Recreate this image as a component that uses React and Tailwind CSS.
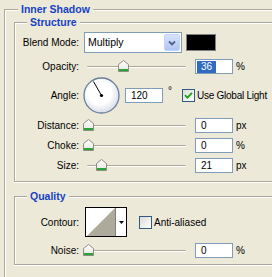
import React from 'react';

const Thumb = () => (
  <svg width="11" height="12" viewBox="0 0 11 12">
    <defs>
      <linearGradient id="thumbFill" x1="0" y1="0" x2="0" y2="1">
        <stop offset="0" stopColor="#ffffff" />
        <stop offset="1" stopColor="#e6e6de" />
      </linearGradient>
    </defs>
    <path d="M0.5 11.5V4.5L5.5 0.5L10.5 4.5V11.5Z" fill="url(#thumbFill)" stroke="#8e8d82" />
    <rect x="1" y="9" width="9" height="2" fill="#2aa33a" />
  </svg>
);

function Slider({ pos }) {
  return (
    <div className="relative ml-[4px] w-[106px] h-[15px] shrink-0">
      <div className="absolute left-[4px] right-[3px] top-[7px] h-[2px] rounded-full border-t border-[#aca899] bg-white" />
      <div className={'absolute top-[1px] ' + pos}>
        <Thumb />
      </div>
    </div>
  );
}

function Field({ value, selected, cls }) {
  return (
    <div className={'h-[15px] w-[38px] shrink-0 border border-[#7f9db9] bg-white pl-[1px] flex items-center ' + cls}>
      <span className={selected ? 'px-[4px] leading-[12px] bg-[#316ac5] text-white' : 'px-[4px] leading-[12px]'}>{value}</span>
    </div>
  );
}

function Label({ children }) {
  return <span className="w-[64px] shrink-0 text-right">{children}</span>;
}

function Check({ checked }) {
  return (
    <div className="w-[13px] h-[13px] shrink-0 border border-[#2f5b85] bg-gradient-to-br from-[#dcdcd4] to-white flex items-center justify-center">
      {checked && (
        <svg width="9" height="9" viewBox="0 0 9 9">
          <path d="M1 4.2L3.4 6.6L8 1.8" fill="none" stroke="#21a121" strokeWidth="1.9" />
        </svg>
      )}
    </div>
  );
}

function Group({ title, cls, children }) {
  return (
    <fieldset className={'border border-r-0 border-[#aca899] shadow-[inset_1px_1px_0_#fff,0_1px_0_#fff] ' + cls}>
      <legend className="ml-[12px] px-[3px] h-[13px] leading-[13px] bg-[#ece9d8] text-[10.5px] font-bold text-[#1542c4]">
        {title}
      </legend>
      {children}
    </fieldset>
  );
}

export default function App() {
  return (
    <div className="w-[272px] h-[277px] overflow-hidden bg-[#ece9d8] pt-[3px] pl-[4px] text-[10px] text-black font-['Liberation_Sans',Arial,sans-serif]">
      <fieldset className="h-[300px] border border-r-0 border-b-0 border-[#aca899] shadow-[inset_1px_1px_0_#fff] pl-[9px]">
        <legend className="ml-[4px] px-[3px] h-[13px] leading-[13px] bg-[#ece9d8] text-[10.5px] font-bold text-[#1542c4]">
          Inner Shadow
        </legend>

        <Group title="Structure" cls="pb-[8px]">
          <div className="flex items-center h-[21px] mt-[3px]">
            <Label>Blend Mode:</Label>
            <div className="ml-[5px] w-[98px] h-[21px] shrink-0 border border-[#7f9db9] bg-white flex items-center justify-between p-[1px]">
              <span className="pl-[2px] text-[10.5px]">Multiply</span>
              <div className="w-[16px] h-full rounded-[2px] border border-[#c3d3fd] bg-gradient-to-b from-[#d6e2fd] to-[#b2c6f4] flex items-center justify-center">
                <svg width="8" height="6" viewBox="0 0 8 6">
                  <path d="M1 1.5L4 4.5L7 1.5" fill="none" stroke="#4d6185" strokeWidth="1.8" />
                </svg>
              </div>
            </div>
            <div className="ml-[4px] w-[30px] h-[17px] shrink-0 border border-[#808080] bg-black" />
          </div>

          <div className="flex items-center h-[15px] mt-[6px]">
            <Label>Opacity:</Label>
            <Slider pos="left-[35px]" />
            <Field value="36" selected cls="ml-[6px]" />
            <span className="ml-[3px]">%</span>
          </div>

          <div className="flex items-center h-[37px] mt-[3px]">
            <Label>Angle:</Label>
            <svg className="ml-[4px] shrink-0" width="37" height="37" viewBox="0 0 37 37">
              <defs>
                <radialGradient id="dialFill" cx="0.45" cy="0.42" r="0.6">
                  <stop offset="0.55" stopColor="#ffffff" />
                  <stop offset="1" stopColor="#d6dbe6" />
                </radialGradient>
              </defs>
              <circle cx="18.5" cy="18.5" r="17.5" fill="url(#dialFill)" stroke="#6a7e9e" strokeWidth="1.3" />
              <line x1="18.5" y1="18.5" x2="10.5" y2="4.6" stroke="#000" strokeWidth="1" />
              <circle cx="18.5" cy="18.5" r="1.6" fill="#000" />
            </svg>
            <Field value="120" cls="ml-[5px]" />
            <span className="ml-[5px] self-start mt-[9px] leading-[10px]">°</span>
            <div className="ml-[10px]"><Check checked /></div>
            <span className="ml-[2px] whitespace-nowrap tracking-[-0.25px]">Use Global Light</span>
          </div>

          <div className="flex items-center h-[15px] mt-[4px]">
            <Label>Distance:</Label>
            <Slider pos="left-0" />
            <Field value="0" cls="ml-[6px]" />
            <span className="ml-[3px]">px</span>
          </div>

          <div className="flex items-center h-[15px] mt-[5px]">
            <Label>Choke:</Label>
            <Slider pos="left-0" />
            <Field value="0" cls="ml-[6px]" />
            <span className="ml-[3px]">%</span>
          </div>

          <div className="flex items-center h-[15px] mt-[5px]">
            <Label>Size:</Label>
            <Slider pos="left-[13px]" />
            <Field value="21" cls="ml-[6px]" />
            <span className="ml-[3px]">px</span>
          </div>
        </Group>

        <Group title="Quality" cls="mt-[8px] pb-[6px]">
          <div className="flex items-center h-[30px] mt-[4px]">
            <Label>Contour:</Label>
            <div className="ml-[6px] w-[42px] h-[30px] shrink-0 border border-black bg-white flex">
              <svg width="29" height="28" viewBox="0 0 29 28" className="shrink-0">
                <rect x="0" y="0" width="29" height="28" fill="#fff" />
                <polygon points="1,28 29,0 29,28" fill="#ada99b" />
              </svg>
              <div className="flex-1 border-l border-[#808080] flex items-center justify-center">
                <svg width="5" height="3" viewBox="0 0 5 3">
                  <path d="M0 0H5L2.5 3Z" fill="#000" />
                </svg>
              </div>
            </div>
            <div className="ml-[12px]"><Check /></div>
            <span className="ml-[2px]">Anti-aliased</span>
          </div>

          <div className="flex items-center h-[15px] mt-[6px]">
            <Label>Noise:</Label>
            <Slider pos="left-0" />
            <Field value="0" cls="ml-[6px]" />
            <span className="ml-[3px]">%</span>
          </div>
        </Group>
      </fieldset>
    </div>
  );
}
